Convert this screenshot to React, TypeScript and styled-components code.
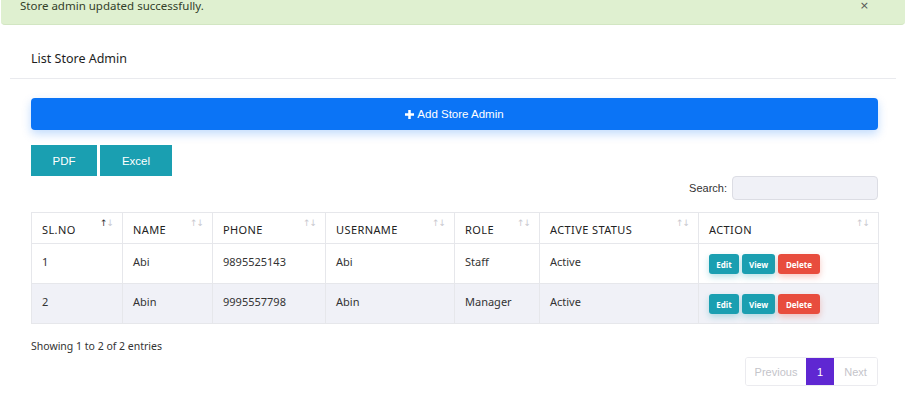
import React from 'react';
import styled, { createGlobalStyle } from 'styled-components';

const GlobalStyle = createGlobalStyle`
  body {
    margin: 0;
    background: #fff;
    font-family: "Noto Sans", "Open Sans", sans-serif;
    color: #333;
    overflow: hidden;
  }
`;

const Alert = styled.div`
  margin-top: -14px;
  margin-left: 1px;
  height: 39px;
  box-sizing: border-box;
  padding: 13px 19px 0;
  background: #dff0d0;
  border-bottom: 1px solid #d2e6c2;
  border-radius: 4px;
  display: flex;
  justify-content: space-between;
  font-size: 11.5px;
  line-height: 14px;
  color: #33402a;
`;

const Close = styled.span`
  font-family: "DejaVu Sans", sans-serif;
  font-size: 11px;
  color: #555;
  margin-right: 17px;
`;

const Card = styled.div`
  margin: 14px 0 0 10px;
  width: 886px;
`;

const CardHeader = styled.div`
  height: 40px;
  box-sizing: border-box;
  padding-left: 21px;
  display: flex;
  align-items: center;
  border-bottom: 1px solid #e9eaee;
  font-size: 12.5px;
  font-weight: 400;
  color: #1e1e1e;
`;

const CardBody = styled.div`
  padding: 19px 18px 0 21px;
`;

const AddButton = styled.button`
  width: 100%;
  height: 32px;
  border: none;
  border-radius: 4px;
  background: #0b74f6;
  color: #fff;
  font-family: "Liberation Sans", Arial, sans-serif;
  font-size: 11.5px;
  box-shadow: 0 4px 10px rgba(11, 116, 246, 0.25);
  display: flex;
  align-items: center;
  justify-content: center;
  gap: 3px;
`;

const ExportRow = styled.div`
  display: flex;
  gap: 3px;
  margin-top: 15px;
`;

const ExportButton = styled.button<{ $w: number }>`
  width: ${p => p.$w}px;
  height: 31px;
  border: none;
  background: #1a9fb1;
  color: #fff;
  font-family: "Liberation Sans", Arial, sans-serif;
  font-size: 11.5px;
`;

const SearchRow = styled.div`
  display: flex;
  justify-content: flex-end;
  align-items: center;
  gap: 5px;
  font-family: "Liberation Sans", Arial, sans-serif;
  font-size: 11px;
  color: #333;
`;

const SearchInput = styled.input`
  width: 146px;
  height: 24px;
  box-sizing: border-box;
  border: 1px solid #dcdde4;
  border-radius: 4px;
  background: #f0f1f7;
`;

const Table = styled.table`
  margin-top: 12px;
  width: 100%;
  border-collapse: collapse;
  table-layout: fixed;
  font-size: 11px;
`;

const Th = styled.th`
  height: 31px;
  box-sizing: border-box;
  padding: 2px 10px 0;
  border: 1px solid #e6e7eb;
  text-align: left;
  font-weight: 400;
  color: #222;
  letter-spacing: 0.4px;
  position: relative;
`;

const Sort = styled.span`
  position: absolute;
  right: 9px;
  top: 5px;
  font-size: 9px;
  font-family: "DejaVu Sans", sans-serif;
  letter-spacing: -1px;
  color: #c9c9cf;
`;

const Up = styled.span<{ $on: boolean }>`
  color: ${p => (p.$on ? '#333' : '#c9c9cf')};
`;

const Tr = styled.tr<{ $odd: boolean }>`
  height: 40px;
  background: ${p => (p.$odd ? '#f0f1f7' : '#fff')};
`;

const Td = styled.td`
  box-sizing: border-box;
  padding: 11px 10px 0;
  border: 1px solid #e6e7eb;
  vertical-align: top;
  line-height: 14px;
  color: #333;
`;

const Actions = styled.div`
  display: flex;
  gap: 3px;
  margin-top: -1px;
`;

const ActionButton = styled.button<{ $danger?: boolean; $w: number }>`
  width: ${p => p.$w}px;
  height: 20px;
  padding: 0;
  border: none;
  border-radius: 3px;
  background: ${p => (p.$danger ? '#e84c3d' : '#1a9fb1')};
  color: #fff;
  font-family: "Noto Sans", sans-serif;
  font-size: 8px;
  font-weight: 700;
  box-shadow: 0 3px 6px ${p => (p.$danger ? 'rgba(232,76,61,0.3)' : 'rgba(26,159,177,0.3)')};
`;

const Footer = styled.div`
  display: flex;
  justify-content: space-between;
  align-items: flex-start;
  padding-top: 15px;
`;

const Info = styled.div`
  font-size: 10.5px;
  line-height: 14px;
  color: #333;
`;

const Pager = styled.div`
  margin-top: 18px;
  display: flex;
  border: 1px solid #ebebef;
  border-radius: 3px;
  overflow: hidden;
`;

const PageItem = styled.div<{ $w: number; $active?: boolean }>`
  width: ${p => p.$w}px;
  height: 27px;
  box-sizing: border-box;
  display: flex;
  align-items: center;
  justify-content: center;
  font-family: "Liberation Sans", Arial, sans-serif;
  font-size: 11px;
  background: ${p => (p.$active ? '#5f27d2' : '#fff')};
  color: ${p => (p.$active ? '#fff' : '#c4c4ca')};
`;

const columns = [
  { label: 'SL.NO', w: 91 },
  { label: 'NAME', w: 90 },
  { label: 'PHONE', w: 113 },
  { label: 'USERNAME', w: 129 },
  { label: 'ROLE', w: 85 },
  { label: 'ACTIVE STATUS', w: 159 },
  { label: 'ACTION', w: 180 },
];

const admins = [
  { no: 1, name: 'Abi', phone: '9895525143', username: 'Abi', role: 'Staff', status: 'Active' },
  { no: 2, name: 'Abin', phone: '9995557798', username: 'Abin', role: 'Manager', status: 'Active' },
];

const App: React.FC = () => {
  return (
    <>
      <GlobalStyle />
      <Alert>
        <span>Store admin updated successfully.</span>
        <Close>×</Close>
      </Alert>
      <Card>
        <CardHeader>List Store Admin</CardHeader>
        <CardBody>
          <AddButton>
            <svg width="9" height="9" viewBox="0 0 10 10">
              <path d="M3.6 0h2.8v3.6H10v2.8H6.4V10H3.6V6.4H0V3.6h3.6z" fill="#fff" />
            </svg>
            Add Store Admin
          </AddButton>
          <ExportRow>
            <ExportButton $w={66}>PDF</ExportButton>
            <ExportButton $w={72}>Excel</ExportButton>
          </ExportRow>
          <SearchRow>
            Search:
            <SearchInput />
          </SearchRow>
          <Table>
            <colgroup>
              {columns.map(c => (
                <col key={c.label} style={{ width: c.w }} />
              ))}
            </colgroup>
            <thead>
              <tr>
                {columns.map((c, i) => (
                  <Th key={c.label}>
                    {c.label}
                    <Sort>
                      <Up $on={i === 0}>↑</Up>↓
                    </Sort>
                  </Th>
                ))}
              </tr>
            </thead>
            <tbody>
              {admins.map((a, i) => (
                <Tr key={a.no} $odd={i % 2 === 1}>
                  <Td>{a.no}</Td>
                  <Td>{a.name}</Td>
                  <Td>{a.phone}</Td>
                  <Td>{a.username}</Td>
                  <Td>{a.role}</Td>
                  <Td>{a.status}</Td>
                  <Td>
                    <Actions>
                      <ActionButton $w={30}>Edit</ActionButton>
                      <ActionButton $w={33}>View</ActionButton>
                      <ActionButton $w={42} $danger>Delete</ActionButton>
                    </Actions>
                  </Td>
                </Tr>
              ))}
            </tbody>
          </Table>
          <Footer>
            <Info>Showing 1 to 2 of 2 entries</Info>
            <Pager>
              <PageItem $w={60}>Previous</PageItem>
              <PageItem $w={28} $active>1</PageItem>
              <PageItem $w={43}>Next</PageItem>
            </Pager>
          </Footer>
        </CardBody>
      </Card>
    </>
  );
};

export default App;
